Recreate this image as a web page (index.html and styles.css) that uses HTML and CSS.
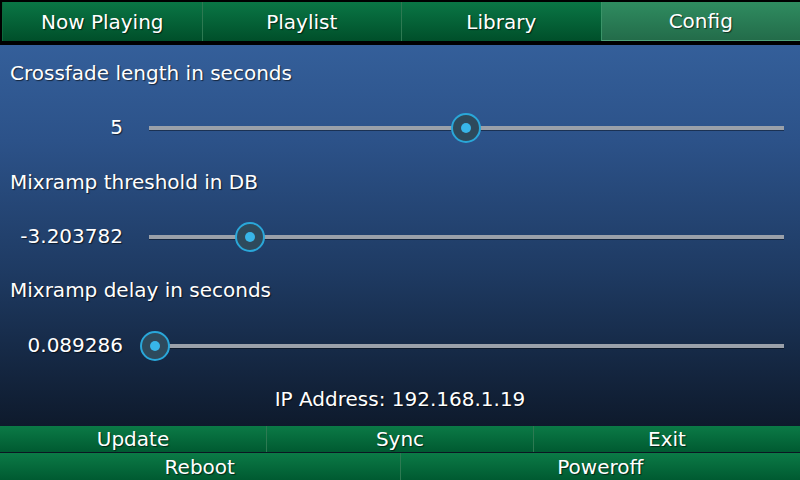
FILE: index.html
```html
<!DOCTYPE html>
<html>
<head>
<meta charset="utf-8">
<link rel="stylesheet" href="styles.css">
</head>
<body>
<div class="screen">
  <nav class="tabs">
    <div class="tab">Now Playing</div>
    <div class="tab">Playlist</div>
    <div class="tab">Library</div>
    <div class="tab active">Config</div>
  </nav>
  <main class="config">
    <div class="label">Crossfade length in seconds</div>
    <div class="slider-row">
      <div class="value">5</div>
      <div class="slider"><div class="track"></div><div class="handle" style="left:311px"></div></div>
    </div>
    <div class="label">Mixramp threshold in DB</div>
    <div class="slider-row">
      <div class="value">-3.203782</div>
      <div class="slider"><div class="track"></div><div class="handle" style="left:95px"></div></div>
    </div>
    <div class="label">Mixramp delay in seconds</div>
    <div class="slider-row">
      <div class="value">0.089286</div>
      <div class="slider"><div class="track"></div><div class="handle" style="left:0px"></div></div>
    </div>
    <div class="ip">IP Address: 192.168.1.19</div>
  </main>
  <footer class="actions">
    <div class="row row-top">
      <div class="btn">Update</div>
      <div class="btn">Sync</div>
      <div class="btn">Exit</div>
    </div>
    <div class="row row-bottom">
      <div class="btn">Reboot</div>
      <div class="btn">Poweroff</div>
    </div>
  </footer>
</div>
</body>
</html>
```
FILE: styles.css
```css
html, body {
  margin: 0;
  padding: 0;
  background: #000;
}
.screen {
  width: 800px;
  height: 480px;
  display: flex;
  flex-direction: column;
  font-family: "DejaVu Sans", sans-serif;
  font-size: 20px;
  color: #fff;
  background: #000;
  overflow: hidden;
}
.tabs {
  display: flex;
  height: 39px;
  margin-top: 2px;
  padding-left: 2px;
  margin-bottom: 4px;
  flex: none;
}
.tab {
  flex: 1;
  display: flex;
  align-items: center;
  justify-content: center;
  background: linear-gradient(#0a7645, #004f2a);
  border-left: 1px solid #2d7a52;
  text-shadow: 1px 1px 1px rgba(0,0,0,0.6);
}
.tab:first-child {
  border-left: 1px solid #0c6a3d;
}
.tab.active {
  background: linear-gradient(#2f8c60, #236c4a);
  border-left: 1px solid #3a9468;
  border-bottom: 1px solid #4ea37a;
}
.config {
  flex: 1;
  background: linear-gradient(#345f9a 0%, #2c5289 25%, #1e3a62 60%, #0e1a2c 100%);
  padding-top: 1px;
  display: flex;
  flex-direction: column;
}
.label {
  height: 54.33px;
  display: flex;
  align-items: center;
  padding-left: 10px;
  text-shadow: 1px 1px 1px rgba(0,0,0,0.6);
}
.slider-row {
  height: 54.33px;
  display: flex;
  align-items: center;
}
.value {
  width: 123px;
  text-align: right;
  margin-right: 17px;
  text-shadow: 1px 1px 1px rgba(0,0,0,0.6);
}
.slider {
  position: relative;
  width: 653px;
  height: 30px;
  margin-top: 2px;
}
.track {
  position: absolute;
  left: 9px;
  right: 9px;
  top: 13px;
  height: 4px;
  background: #9aa0a9;
  box-shadow: 0 1px 0 rgba(0,0,0,0.4);
}
.handle {
  position: absolute;
  top: 0;
  width: 26px;
  height: 26px;
  border: 2px solid #2aa7d9;
  border-radius: 50%;
  background: #2e4a5c;
}
.handle::after {
  content: "";
  position: absolute;
  left: 8px;
  top: 8px;
  width: 10px;
  height: 10px;
  border-radius: 50%;
  background: #38b6e8;
}
.ip {
  height: 54.33px;
  display: flex;
  align-items: center;
  justify-content: center;
  text-shadow: 1px 1px 1px rgba(0,0,0,0.6);
}
.actions {
  flex: none;
  display: flex;
  flex-direction: column;
  gap: 1px;
  background: #0b1622;
}
.row {
  display: flex;
}
.row-top { height: 26px; }
.row-bottom { height: 27px; }
.btn {
  flex: 1;
  display: flex;
  align-items: center;
  justify-content: center;
  background: linear-gradient(#0b7a46, #005a31);
  border-left: 1px solid #2d7a52;
  text-shadow: 1px 1px 1px rgba(0,0,0,0.6);
}
.btn:first-child {
  border-left: none;
}
```
